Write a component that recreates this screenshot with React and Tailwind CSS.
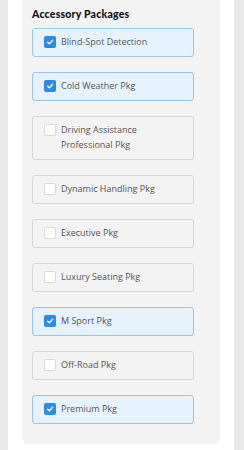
import React from "react";

const items = [
  { label: "Blind-Spot Detection", checked: true },
  { label: "Cold Weather Pkg", checked: true },
  { label: "Driving Assistance Professional Pkg", checked: false },
  { label: "Dynamic Handling Pkg", checked: false },
  { label: "Executive Pkg", checked: false },
  { label: "Luxury Seating Pkg", checked: false },
  { label: "M Sport Pkg", checked: true },
  { label: "Off-Road Pkg", checked: false },
  { label: "Premium Pkg", checked: true },
];

function Box({ checked }) {
  if (checked) {
    return (
      <span className="mt-[1px] flex h-[12px] w-[12px] shrink-0 items-center justify-center rounded-[2px] bg-[#2f8ae2]">
        <svg width="8" height="8" viewBox="0 0 10 10" fill="none">
          <path d="M2 5.2 L4.2 7.3 L8.2 2.8" stroke="white" strokeWidth="1.7" strokeLinecap="round" strokeLinejoin="round" />
        </svg>
      </span>
    );
  }
  return <span className="mt-[1px] h-[12px] w-[12px] shrink-0 rounded-[2px] border border-[#dadada] bg-white" />;
}

export default function App() {
  return (
    <div className="flex h-[450px] w-[244px] bg-[#e9e9e9] pl-[8px] pr-[10px]" style={{ fontFamily: "'Open Sans', sans-serif" }}>
      <div className="flex-1 bg-white px-[14px] pb-[8px]">
        <div className="rounded-b-[6px] bg-[#f3f3f3] pb-[20px] pl-[10px] pt-[7px]">
          <h2 className="mb-[6px] text-[10.5px] font-black leading-[15px] text-[#111]" style={{ fontFamily: "Lato, sans-serif", letterSpacing: "0.2px" }}>
            Accessory Packages
          </h2>
          <div className="flex flex-col gap-[15px]">
            {items.map((it) => (
              <div
                key={it.label}
                className={
                  "flex w-[162px] items-start gap-[5px] rounded-[3px] border px-[11px] py-[6.25px] " +
                  (it.checked ? "border-[#9cc4e4] bg-[#e6f3fd]" : "border-[#d6d6d6] bg-[#f3f3f3]")
                }
              >
                <Box checked={it.checked} />
                <span className="text-[9px] leading-[14.5px] text-[#555]">{it.label}</span>
              </div>
            ))}
          </div>
        </div>
      </div>
    </div>
  );
}
